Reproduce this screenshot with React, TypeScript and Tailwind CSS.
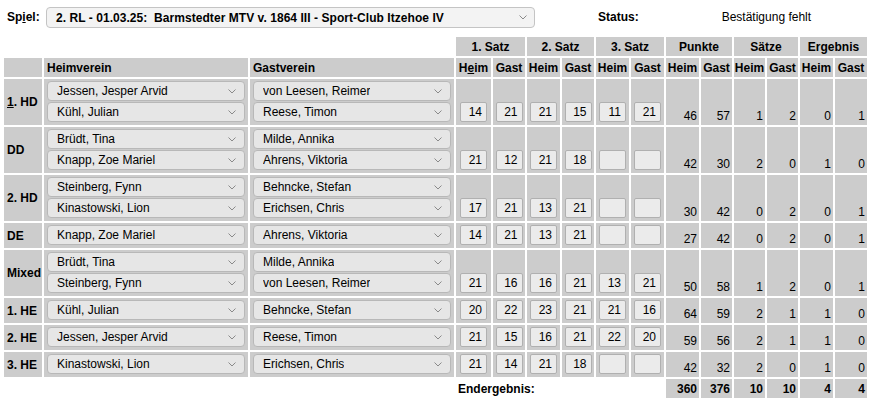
import React from "react";

type Row = {
  label: React.ReactNode;
  home: string[];
  guest: string[];
  scores: string[];
  totals: string[];
};

const rows: Row[] = [
  {
    label: (
      <>
        <u>1</u>. HD
      </>
    ),
    home: ["Jessen, Jesper Arvid", "Kühl, Julian"],
    guest: ["von Leesen, Reimer", "Reese, Timon"],
    scores: ["14", "21", "21", "15", "11", "21"],
    totals: ["46", "57", "1", "2", "0", "1"],
  },
  {
    label: "DD",
    home: ["Brüdt, Tina", "Knapp, Zoe Mariel"],
    guest: ["Milde, Annika", "Ahrens, Viktoria"],
    scores: ["21", "12", "21", "18", "", ""],
    totals: ["42", "30", "2", "0", "1", "0"],
  },
  {
    label: "2. HD",
    home: ["Steinberg, Fynn", "Kinastowski, Lion"],
    guest: ["Behncke, Stefan", "Erichsen, Chris"],
    scores: ["17", "21", "13", "21", "", ""],
    totals: ["30", "42", "0", "2", "0", "1"],
  },
  {
    label: "DE",
    home: ["Knapp, Zoe Mariel"],
    guest: ["Ahrens, Viktoria"],
    scores: ["14", "21", "13", "21", "", ""],
    totals: ["27", "42", "0", "2", "0", "1"],
  },
  {
    label: "Mixed",
    home: ["Brüdt, Tina", "Steinberg, Fynn"],
    guest: ["Milde, Annika", "von Leesen, Reimer"],
    scores: ["21", "16", "16", "21", "13", "21"],
    totals: ["50", "58", "1", "2", "0", "1"],
  },
  {
    label: "1. HE",
    home: ["Kühl, Julian"],
    guest: ["Behncke, Stefan"],
    scores: ["20", "22", "23", "21", "21", "16"],
    totals: ["64", "59", "2", "1", "1", "0"],
  },
  {
    label: "2. HE",
    home: ["Jessen, Jesper Arvid"],
    guest: ["Reese, Timon"],
    scores: ["21", "15", "16", "21", "22", "20"],
    totals: ["59", "56", "2", "1", "1", "0"],
  },
  {
    label: "3. HE",
    home: ["Kinastowski, Lion"],
    guest: ["Erichsen, Chris"],
    scores: ["21", "14", "21", "18", "", ""],
    totals: ["42", "32", "2", "0", "1", "0"],
  },
];

const colWidths = [
  "w-[35px]",
  "w-[32px]",
  "w-[33px]",
  "w-[32px]",
  "w-[33px]",
  "w-[33px]",
  "w-[33px]",
  "w-[31px]",
  "w-[31px]",
  "w-[31px]",
  "w-[33px]",
  "w-[32px]",
];

function Chevron() {
  return (
    <svg width="8" height="5" viewBox="0 0 8 5" className="shrink-0">
      <path d="M0.5 0.5 L4 4 L7.5 0.5" fill="none" stroke="#8a8a8a" strokeWidth="1" />
    </svg>
  );
}

function FakeSelect({ value }: { value: string }) {
  return (
    <div className="flex h-[20px] items-center justify-between rounded-[4px] border border-[#b8b8b8] bg-[#e6e6e6] pl-[9px] pr-[8px]">
      <span className="truncate">{value}</span>
      <Chevron />
    </div>
  );
}

function ScoreBox({ value }: { value: string }) {
  return (
    <div className="mx-auto flex h-[20px] w-[27px] items-center justify-end rounded-[2px] border border-[#b0b0b0] bg-[#ebebeb] pr-[4px]">
      {value}
    </div>
  );
}

const grey = "bg-[#cccccc]";

export default function App() {
  return (
    <div
      className="w-[870px] h-[401px] overflow-hidden bg-white text-[12px] leading-[14px] text-black"
      style={{ fontFamily: '"Liberation Sans", Arial, sans-serif' }}
    >
      <div className="flex h-[35px] items-start pt-[7px]">
        <div className="w-[46px] pl-[7px] pt-[3px] font-bold">
          Sp<u>i</u>el:
        </div>
        <div className="flex h-[21px] w-[489px] items-center justify-between rounded-[4px] border border-[#c4c4c4] bg-[#f3f3f3] pl-[9px] pr-[7px] font-bold">
          <span className="whitespace-pre tracking-[0.05px]">2. RL - 01.03.25:  Barmstedter MTV v. 1864 III - Sport-Club Itzehoe IV</span>
          <Chevron />
        </div>
        <div className="ml-[63px] pt-[3px] font-bold">Status:</div>
        <div className="ml-[83px] pt-[3px]">Bestätigung fehlt</div>
      </div>
      <table className="ml-[2px] border-separate border-spacing-[2px] table-fixed">
        <colgroup>
          <col className="w-[38px]" />
          <col className="w-[204px]" />
          <col className="w-[204px]" />
          {colWidths.map((w, i) => (
            <col key={i} className={w} />
          ))}
        </colgroup>
        <thead>
          <tr className="h-[19px] font-bold">
            <td />
            <td />
            <td />
            {["1. Satz", "2. Satz", "3. Satz", "Punkte", "Sätze", "Ergebnis"].map((t) => (
              <td key={t} colSpan={2} className={`${grey} text-center`}>
                {t}
              </td>
            ))}
          </tr>
          <tr className="h-[19px] font-bold">
            <td className={grey} />
            <td className={`${grey} pl-[3px]`}>Heimverein</td>
            <td className={`${grey} pl-[3px]`}>Gastverein</td>
            {Array.from({ length: 6 }).map((_, i) => (
              <React.Fragment key={i}>
                <td className={`${grey} text-center`}>
                  {i === 0 ? (
                    <>
                      H<u>e</u>im
                    </>
                  ) : (
                    "Heim"
                  )}
                </td>
                <td className={`${grey} text-center`}>Gast</td>
              </React.Fragment>
            ))}
          </tr>
        </thead>
        <tbody>
          {rows.map((r, idx) => (
            <tr key={idx}>
              <td className={`${grey} pl-[3px] align-middle font-bold`}>{r.label}</td>
              <td className={`${grey} px-[3px] pt-[2px] pb-[3px]`}>
                <div className="flex flex-col gap-[1px]">
                  {r.home.map((h) => (
                    <FakeSelect key={h} value={h} />
                  ))}
                </div>
              </td>
              <td className={`${grey} px-[3px] pt-[2px] pb-[3px]`}>
                <div className="flex flex-col gap-[1px]">
                  {r.guest.map((g) => (
                    <FakeSelect key={g} value={g} />
                  ))}
                </div>
              </td>
              {r.scores.map((s, i) => (
                <td key={i} className={`${grey} align-bottom pb-[3px]`}>
                  <ScoreBox value={s} />
                </td>
              ))}
              {r.totals.map((t, i) => (
                <td key={i} className={`${grey} align-bottom pr-[2px] pb-[2px] text-right`}>
                  {t}
                </td>
              ))}
            </tr>
          ))}
          <tr className="h-[19px] font-bold">
            <td />
            <td />
            <td />
            <td colSpan={6} className="pl-[2px]">
              Endergebnis:
            </td>
            {["360", "376", "10", "10", "4", "4"].map((t, i) => (
              <td key={i} className={`${grey} pr-[2px] text-right`}>
                {t}
              </td>
            ))}
          </tr>
        </tbody>
      </table>
    </div>
  );
}
